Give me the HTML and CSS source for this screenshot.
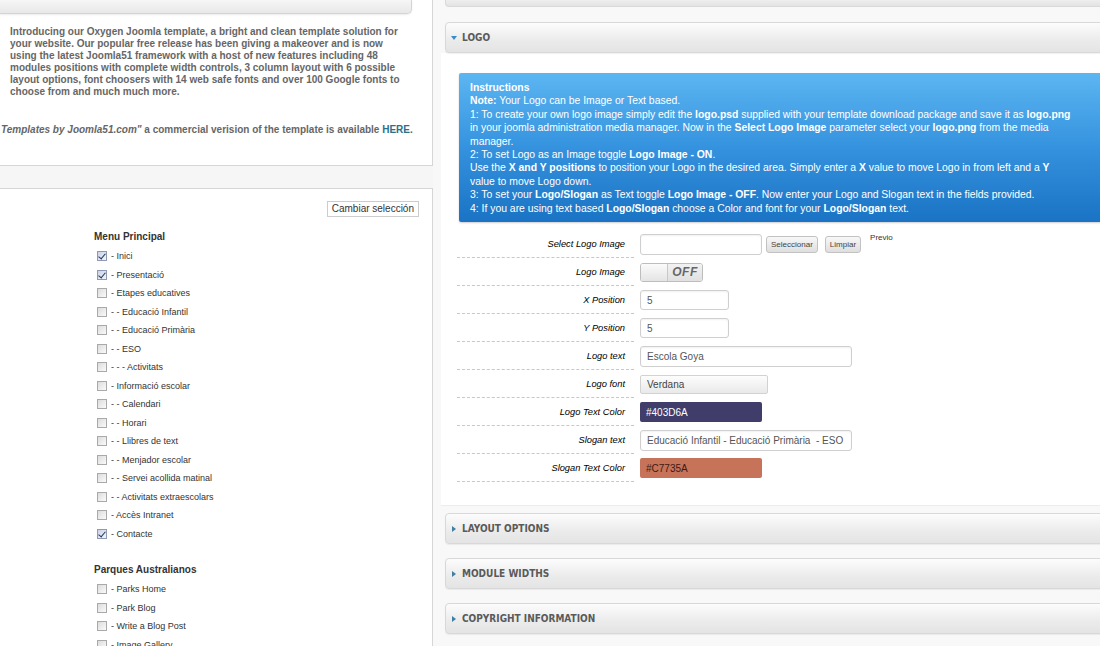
FILE: index.html
```html
<!DOCTYPE html>
<html lang="es">
<head>
    <meta charset="UTF-8">
    <title>Plantilla - Logo</title>
    <link rel="stylesheet" href="styles.css">
</head>
<body>
<div class="page">

    <div class="side">
        <div class="intro">
            <div class="intro-bar"></div>
            <p>Introducing our Oxygen Joomla template, a bright and clean template solution for your website. Our popular free release has been giving a makeover and is now using the latest Joomla51 framework with a host of new features including 48 modules positions with complete width controls, 3 column layout with 6 possible layout options, font choosers with 14 web safe fonts and over 100 Google fonts to choose from and much much more.</p>
            <p class="credit"><i>Templates by Joomla51.com"</i> a commercial verision of the template is available <a href="#">HERE</a>.</p>
        </div>

        <div class="menus">
            <div class="menus-top">
                <button class="btn-plain" type="button">Cambiar selección</button>
            </div>

            <div class="menu-group">
                <h4>Menu Principal</h4>
                <div class="item"><span class="cb checked"></span>- Inici</div>
                <div class="item"><span class="cb checked"></span>- Presentació</div>
                <div class="item"><span class="cb"></span>- Etapes educatives</div>
                <div class="item"><span class="cb"></span>- - Educació Infantil</div>
                <div class="item"><span class="cb"></span>- - Educació Primària</div>
                <div class="item"><span class="cb"></span>- - ESO</div>
                <div class="item"><span class="cb"></span>- - - Activitats</div>
                <div class="item"><span class="cb"></span>- Informació escolar</div>
                <div class="item"><span class="cb"></span>- - Calendari</div>
                <div class="item"><span class="cb"></span>- - Horari</div>
                <div class="item"><span class="cb"></span>- - Llibres de text</div>
                <div class="item"><span class="cb"></span>- - Menjador escolar</div>
                <div class="item"><span class="cb"></span>- - Servei acollida matinal</div>
                <div class="item"><span class="cb"></span>- - Activitats extraescolars</div>
                <div class="item"><span class="cb"></span>- Accès Intranet</div>
                <div class="item"><span class="cb checked"></span>- Contacte</div>
            </div>

            <div class="menu-group">
                <h4>Parques Australianos</h4>
                <div class="item"><span class="cb"></span>- Parks Home</div>
                <div class="item"><span class="cb"></span>- Park Blog</div>
                <div class="item"><span class="cb"></span>- Write a Blog Post</div>
                <div class="item"><span class="cb"></span>- Image Gallery</div>
            </div>
        </div>
    </div>

    <div class="main">
        <div class="acc-stub"></div>

        <div class="acc-head open"><span class="arrow"></span>Logo</div>
        <div class="acc-body">
            <div class="instructions">
                <b>Instructions</b><br>
                <b>Note:</b> Your Logo can be Image or Text based.<br>
                1: To create your own logo image simply edit the <b>logo.psd</b> supplied with your template download package and save it as <b>logo.png</b> in your joomla administration media manager. Now in the <b>Select Logo Image</b> parameter select your <b>logo.png</b> from the media manager.<br>
                2: To set Logo as an Image toggle <b>Logo Image - ON</b>.<br>
                Use the <b>X and Y positions</b> to position your Logo in the desired area. Simply enter a <b>X</b> value to move Logo in from left and a <b>Y</b> value to move Logo down.<br>
                3: To set your <b>Logo/Slogan</b> as Text toggle <b>Logo Image - OFF</b>. Now enter your Logo and Slogan text in the fields provided.<br>
                4: If you are using text based <b>Logo/Slogan</b> choose a Color and font for your <b>Logo/Slogan</b> text.
            </div>

            <div class="params">
                <div class="row">
                    <div class="lbl">Select Logo Image</div>
                    <div class="fld">
                        <input class="txt w-md" type="text" value="">
                        <button class="btn-small" type="button">Seleccionar</button>
                        <button class="btn-small gap" type="button">Limpiar</button>
                        <span class="preview">Previo</span>
                    </div>
                </div>
                <div class="row">
                    <div class="lbl">Logo Image</div>
                    <div class="fld">
                        <div class="toggle"><span class="knob"></span><span class="state">OFF</span></div>
                    </div>
                </div>
                <div class="row">
                    <div class="lbl">X Position</div>
                    <div class="fld"><input class="txt w-sm" type="text" value="5"></div>
                </div>
                <div class="row">
                    <div class="lbl">Y Position</div>
                    <div class="fld"><input class="txt w-sm" type="text" value="5"></div>
                </div>
                <div class="row">
                    <div class="lbl">Logo text</div>
                    <div class="fld"><input class="txt w-lg" type="text" value="Escola Goya"></div>
                </div>
                <div class="row">
                    <div class="lbl">Logo font</div>
                    <div class="fld"><div class="select">Verdana</div></div>
                </div>
                <div class="row">
                    <div class="lbl">Logo Text Color</div>
                    <div class="fld"><div class="swatch logo-color">#403D6A</div></div>
                </div>
                <div class="row">
                    <div class="lbl">Slogan text</div>
                    <div class="fld"><input class="txt w-lg" type="text" value="Educació Infantil - Educació Primària  - ESO"></div>
                </div>
                <div class="row">
                    <div class="lbl">Slogan Text Color</div>
                    <div class="fld"><div class="swatch slogan-color">#C7735A</div></div>
                </div>
            </div>
        </div>

        <div class="acc-head"><span class="arrow"></span>Layout Options</div>
        <div class="acc-head"><span class="arrow"></span>Module Widths</div>
        <div class="acc-head"><span class="arrow"></span>Copyright Information</div>
    </div>

</div>
</body>
</html>
```

FILE: styles.css
```css
html, body {
    margin: 0;
    padding: 0;
    overflow: hidden;
}
body {
    font-family: "Liberation Sans", Arial, sans-serif;
    background-color: #f6f6f6;
    width: 1100px;
    height: 646px;
}
.page {
    display: flex;
    height: 646px;
}

/* left column */
.side {
    width: 433px;
    flex: none;
    display: flex;
    flex-direction: column;
}
.intro {
    flex: none;
    background-color: #fff;
    border-right: 1px solid #d6d6d6;
    border-bottom: 1px solid #d6d6d6;
    height: 165px;
}
.intro-bar {
    height: 13px;
    width: 411px;
    background: linear-gradient(#f6f6f6, #e8e8e8);
    border-right: 1px solid #d4d4d4;
    border-bottom: 1px solid #d4d4d4;
    border-radius: 0 0 5px 0;
    box-shadow: 0 1px 2px rgba(0, 0, 0, 0.08);
}
.intro p {
    margin: 12px 0 0 10px;
    width: 398px;
    font-size: 10px;
    line-height: 12px;
    font-weight: bold;
    color: #666;
}
.intro p.credit {
    margin: 26px 0 0 1px;
    width: auto;
    white-space: nowrap;
}
.intro a {
    color: #2a6f8c;
    text-decoration: none;
}
.menus {
    margin-top: 22px;
    flex: 1;
    background-color: #fff;
    border-top: 1px solid #d6d6d6;
    border-right: 1px solid #d6d6d6;
}
.menus-top {
    display: flex;
    justify-content: flex-end;
    padding: 12px 13px 0 0;
}
.btn-plain {
    font-family: "Liberation Sans", Arial, sans-serif;
    font-size: 10px;
    color: #333;
    background-color: #fff;
    border: 1px solid #ccc;
    padding: 1px 4px;
    height: 16px;
    line-height: 12px;
}
.menu-group {
    margin-left: 94px;
}
.menu-group h4 {
    margin: 14px 0 4px 0;
    font-size: 10px;
    line-height: 12px;
    color: #333;
}
.menu-group + .menu-group h4 {
    margin-top: 21px;
}
.item {
    display: flex;
    align-items: center;
    height: 18.5px;
    padding-left: 3px;
    font-size: 9px;
    color: #333;
}
.cb {
    width: 8px;
    height: 8px;
    margin-right: 4px;
    border: 1px solid #a9a9a9;
    background: linear-gradient(135deg, #dcdcdc, #fafafa);
    position: relative;
}
.cb.checked {
    background: linear-gradient(135deg, #c9d3e6, #f2f5fb);
    border-color: #8e9ab3;
}
.cb.checked::after {
    content: "";
    position: absolute;
    left: 2px;
    top: 0px;
    width: 3px;
    height: 6px;
    border-right: 1.5px solid #26345a;
    border-bottom: 1.5px solid #26345a;
    transform: rotate(40deg);
}

/* right column */
.main {
    width: 680px;
    flex: none;
    background-color: #f8f8f8;
}
.acc-stub {
    height: 6px;
    margin-left: 12px;
    background: linear-gradient(#eeeeee, #e3e3e3);
    border: 1px solid #d9d9d9;
    border-top: none;
    border-radius: 0 0 4px 4px;
}
.acc-head {
    height: 29px;
    margin: 14px 0 0 12px;
    display: flex;
    align-items: center;
    padding-left: 16px;
    background: linear-gradient(#fcfcfc, #ebebeb 60%, #e4e4e4);
    border: 1px solid #d8d8d8;
    border-radius: 4px;
    box-shadow: 0 1px 1px rgba(0, 0, 0, 0.06);
    font-family: "DejaVu Sans Condensed", "DejaVu Sans", sans-serif;
    font-stretch: condensed;
    font-weight: bold;
    font-size: 10px;
    color: #5a5a5a;
    text-transform: uppercase;
    position: relative;
}
.acc-head.open {
    margin-top: 15px;
}
.arrow {
    position: absolute;
    left: 6px;
    top: 12px;
    width: 0;
    height: 0;
    border-top: 3px solid transparent;
    border-bottom: 3px solid transparent;
    border-left: 4px solid #3f7fa6;
}
.acc-head.open .arrow {
    left: 5px;
    top: 13px;
    border-left: 3px solid transparent;
    border-right: 3px solid transparent;
    border-top: 4px solid #3a8cc4;
    border-bottom: none;
}
.acc-body {
    margin-left: 8px;
    height: 432px;
    padding-top: 20px;
    background-color: #fff;
    border-bottom: 1px solid #ececec;
}
.acc-body + .acc-head {
    margin-top: 7px;
}

.instructions {
    margin-left: 18px;
    padding: 8px 40px 7px 11px;
    width: 602px;
    background: linear-gradient(#5cb6f2, #3592de 50%, #1a73c4);
    border-radius: 2px;
    box-shadow: 0 1px 2px rgba(0, 0, 0, 0.2);
    font-size: 10.4px;
    line-height: 13.4px;
    color: #fff;
}

.params {
    margin: 8px 0 0 16px;
}
.row {
    display: flex;
    height: 28px;
}
.lbl {
    width: 168px;
    padding-right: 9px;
    display: flex;
    align-items: center;
    justify-content: flex-end;
    border-bottom: 1px dashed #c8c8c8;
    font-size: 9.3px;
    font-style: italic;
    color: #000;
}
.fld {
    margin-left: 6px;
    display: flex;
    align-items: center;
    gap: 4px;
}
.txt {
    box-sizing: border-box;
    height: 21px;
    padding: 0 6px;
    border: 1px solid #cfcfcf;
    border-radius: 3px;
    box-shadow: inset 0 1px 2px rgba(0, 0, 0, 0.06);
    font-family: "Liberation Sans", Arial, sans-serif;
    font-size: 10px;
    color: #555;
}
.w-sm { width: 89px; height: 20px; }
.w-md { width: 122px; }
.w-lg { width: 212px; }
.btn-small {
    height: 17px;
    padding: 0 4px;
    font-family: "Liberation Sans", Arial, sans-serif;
    font-size: 8px;
    color: #444;
    background: linear-gradient(#f8f8f8, #dedede);
    border: 1px solid #c2c2c2;
    border-radius: 3px;
}
.btn-small.gap {
    margin-left: 3px;
}
.preview {
    align-self: flex-start;
    margin: 3px 0 0 5px;
    font-size: 8px;
    color: #333;
}
.toggle {
    display: flex;
    width: 61px;
    height: 17px;
    border: 1px solid #bdbdbd;
    border-radius: 3px;
    overflow: hidden;
}
.knob {
    width: 26px;
    background: linear-gradient(#fbfbfb, #e4e4e4);
    border-right: 1px solid #c8c8c8;
}
.state {
    flex: 1;
    display: flex;
    align-items: center;
    justify-content: center;
    background: linear-gradient(#f2f2f2, #e0e0e0);
    font-size: 12px;
    font-style: italic;
    font-weight: bold;
    color: #666;
    letter-spacing: 0.5px;
}
.select {
    box-sizing: border-box;
    width: 128px;
    height: 19px;
    padding-left: 6px;
    display: flex;
    align-items: center;
    background: linear-gradient(#fdfdfd, #e9e9e9);
    border: 1px solid #d2d2d2;
    border-radius: 2px;
    font-size: 10px;
    color: #444;
}
.swatch {
    box-sizing: border-box;
    width: 122px;
    height: 20px;
    padding-left: 6px;
    display: flex;
    align-items: center;
    border-radius: 2px;
    font-size: 10px;
}
.logo-color {
    background-color: #403d6a;
    color: #fff;
}
.slogan-color {
    background-color: #c7735a;
    color: #3b1a12;
}
```
